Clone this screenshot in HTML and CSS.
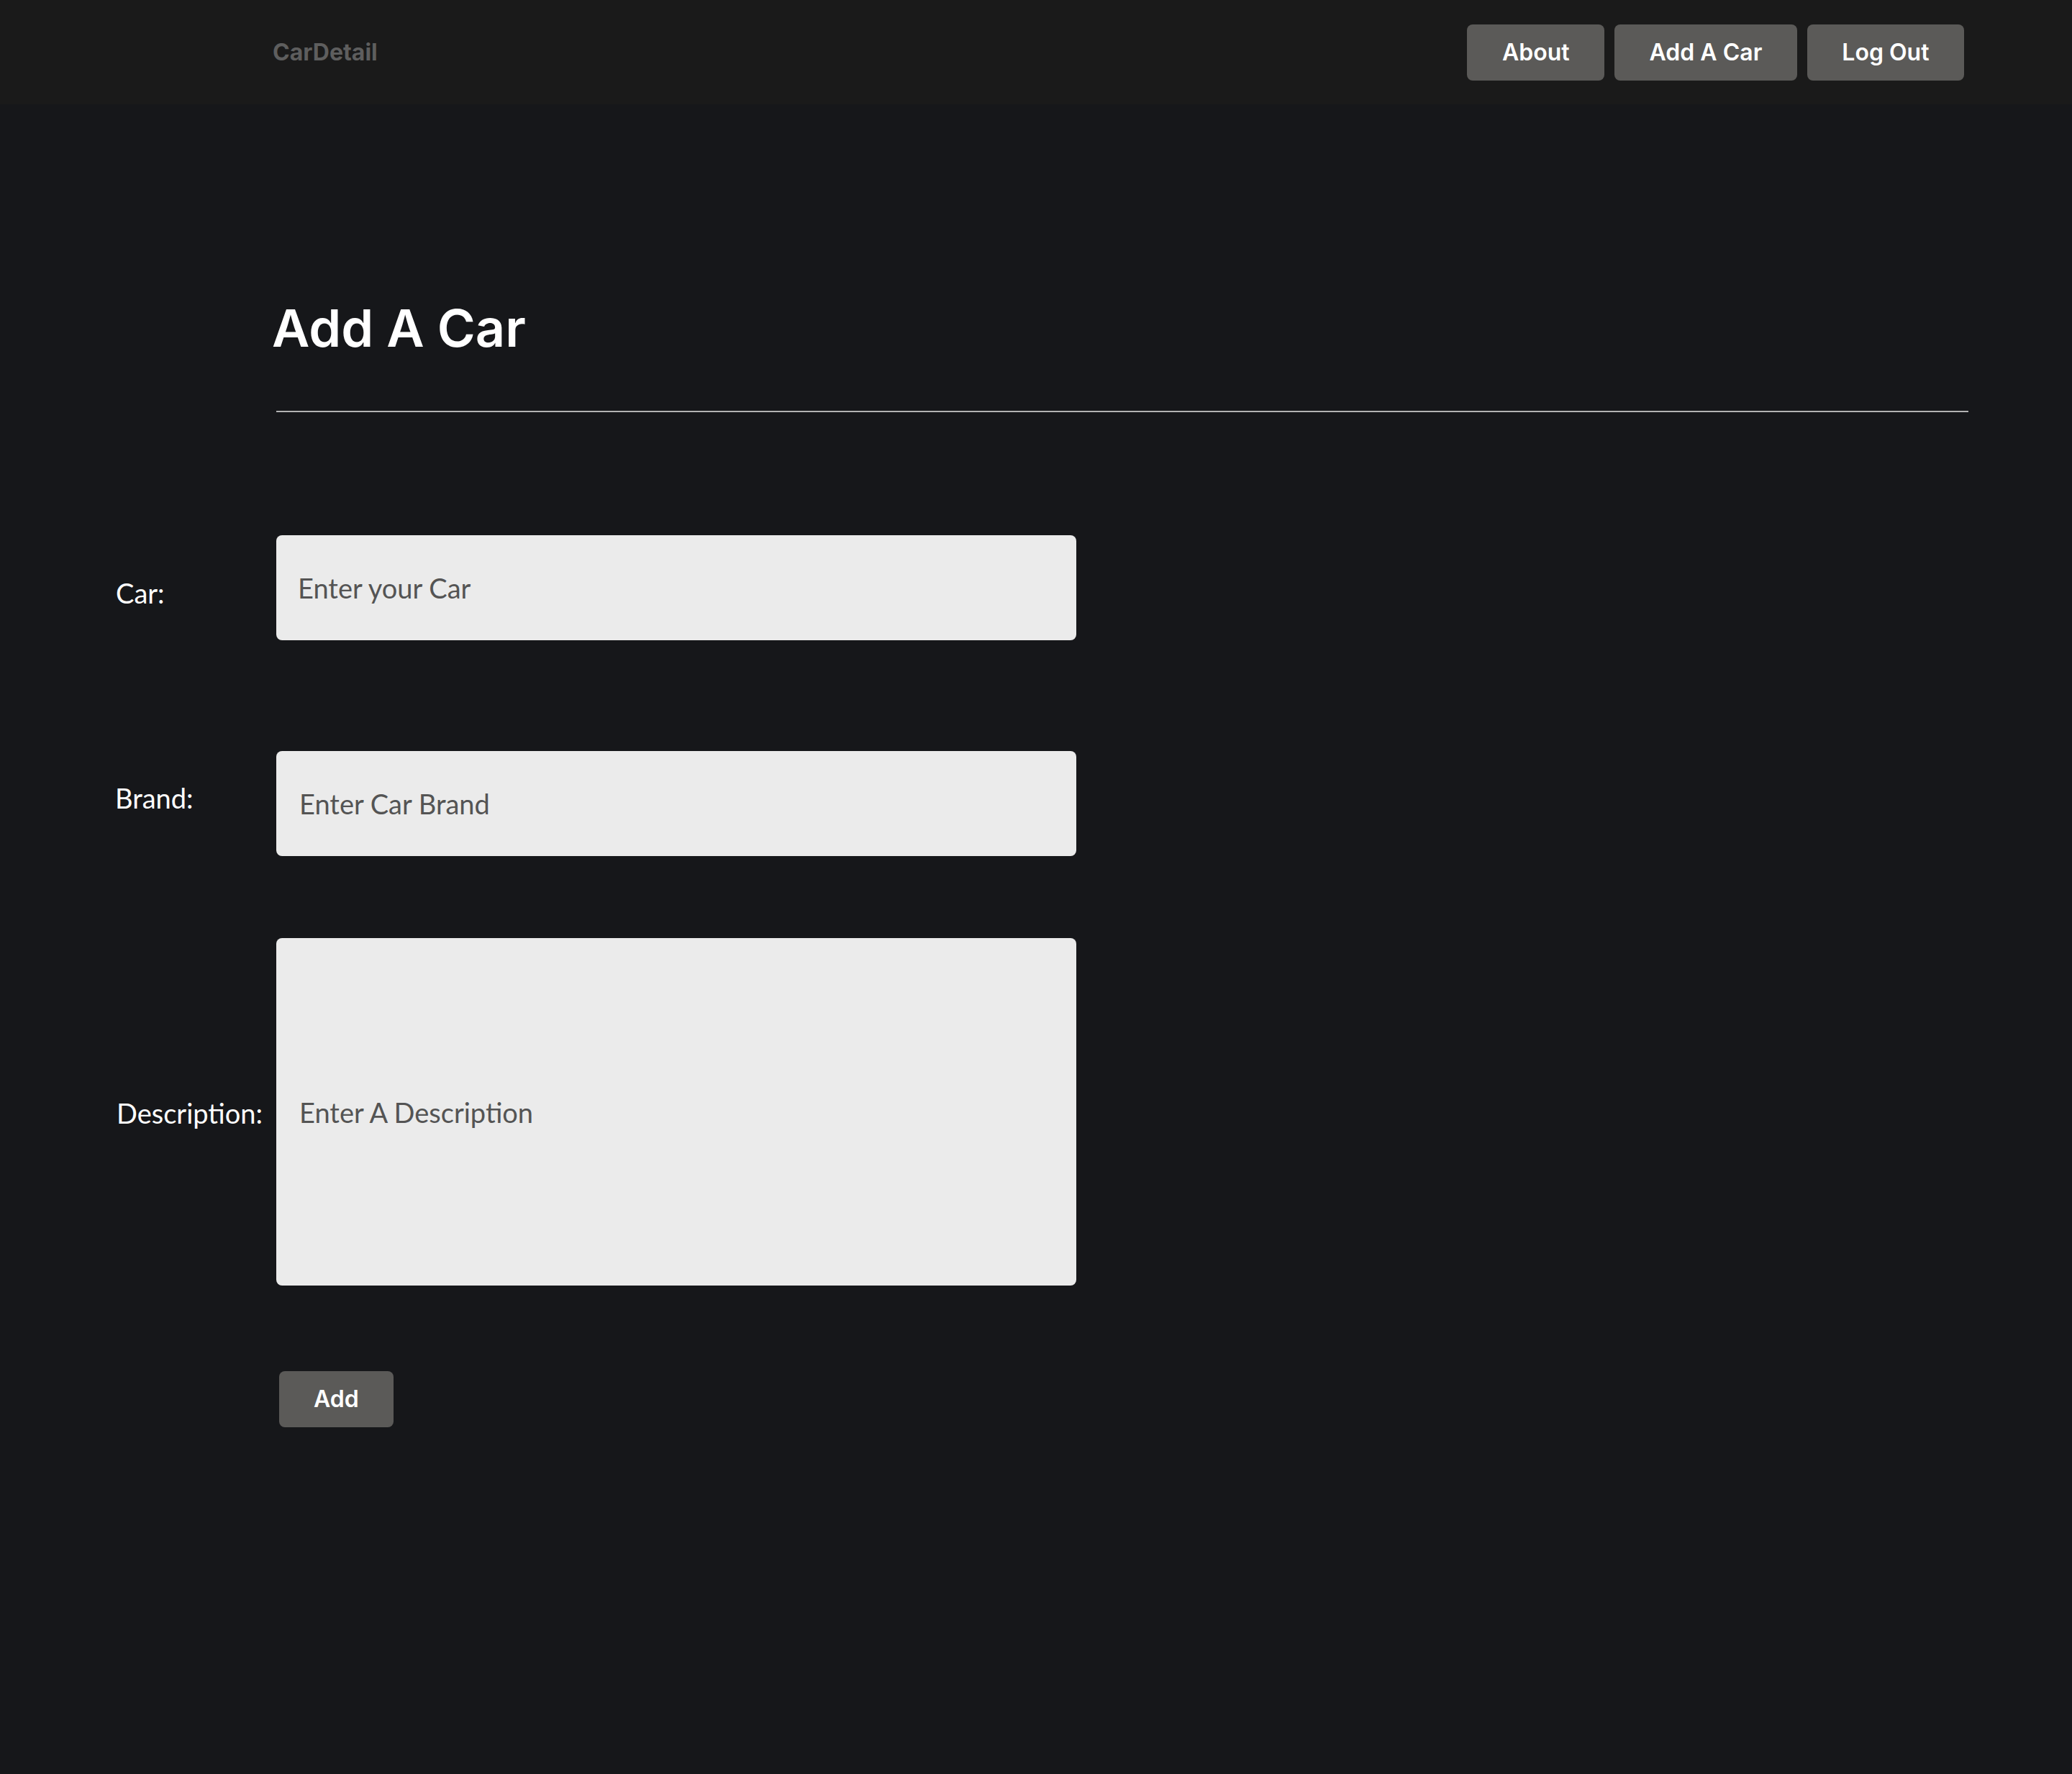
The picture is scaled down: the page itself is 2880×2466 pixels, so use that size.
FILE: index.html
```html
<!DOCTYPE html>
<html lang="en">
<head>
<meta charset="utf-8">
<title>CarDetail - Add A Car</title>
<link rel="stylesheet" href="styles.css">
</head>
<body>
<header class="navbar">
  <a class="brand" href="#">CarDetail</a>
  <nav class="nav-actions">
    <button class="btn" type="button">About</button>
    <button class="btn" type="button">Add A Car</button>
    <button class="btn" type="button">Log Out</button>
  </nav>
</header>
<main class="page">
  <h1 class="title">Add A Car</h1>
  <hr class="rule">
  <form class="car-form">
    <div class="field-row row-car">
      <label class="field-label label-car" for="car">Car:</label>
      <input class="field-input" id="car" type="text" placeholder="Enter your Car">
    </div>
    <div class="field-row row-brand">
      <label class="field-label label-brand" for="brand">Brand:</label>
      <input class="field-input field-brand" id="brand" type="text" placeholder="Enter Car Brand">
    </div>
    <div class="field-row row-desc">
      <label class="field-label label-desc" for="desc">Description:</label>
      <input class="field-input field-tall" id="desc" type="text" placeholder="Enter A Description">
    </div>
    <button class="btn btn-add" type="button">Add</button>
  </form>
</main>
</body>
</html>
```

FILE: styles.css
```css
html {
  background: #16171a;
}

body {
  margin: 0;
  min-height: 2466px;
  background: #16171a;
  font-family: Inter, "Noto Sans", sans-serif;
  color: #ffffff;
}

.navbar {
  height: 145px;
  box-sizing: border-box;
  background: #1a1a1a;
  display: flex;
  align-items: center;
  justify-content: space-between;
  padding: 0 150px 0 379px;
}

.brand {
  font-family: Inter, sans-serif;
  font-weight: 700;
  font-size: 32px;
  color: #5e5e5e;
  text-decoration: none;
}

.nav-actions {
  display: flex;
  gap: 14px;
}

.btn {
  font-family: Inter, sans-serif;
  font-weight: 600;
  font-size: 32px;
  line-height: 38px;
  color: #ffffff;
  background: #5b5a58;
  border: none;
  border-radius: 8px;
  padding: 20px 48.5px;
  cursor: pointer;
}

.page {
  display: flex;
  flex-direction: column;
}

.title {
  margin: 267px 0 0 378px;
  font-family: Inter, sans-serif;
  font-weight: 600;
  font-size: 72px;
  line-height: 87px;
  color: #ffffff;
}

.rule {
  margin: 72px 0 0 384px;
  width: 2352px;
  height: 2px;
  border: none;
  background: #b3b3b3;
}

.car-form {
  margin-top: 171px;
  padding-left: 160px;
  display: flex;
  flex-direction: column;
  align-items: flex-start;
}

.field-row {
  display: flex;
  align-items: flex-start;
}

.row-car { margin-bottom: 154px; }
.row-brand { margin-bottom: 114px; }
.row-desc { margin-bottom: 119px; }

.field-label {
  width: 224px;
  box-sizing: border-box;
  flex-shrink: 0;
  font-family: Lato, "Open Sans", sans-serif;
  font-size: 38px;
  line-height: 46px;
  color: #ffffff;
}

.label-car { padding-top: 57px; padding-left: 1px; }
.label-brand { padding-top: 42px; }
.label-desc { padding-top: 220px; padding-left: 2px; }

.field-input {
  width: 1112px;
  height: 146px;
  box-sizing: border-box;
  border: none;
  border-radius: 8px;
  background: #ebebeb;
  padding: 0 30px;
  font-family: Lato, "Open Sans", sans-serif;
  font-size: 38px;
  color: #333333;
  outline: none;
}

.field-brand {
  padding-left: 32px;
}

.field-tall {
  height: 483px;
  padding-left: 32px;
}

.field-input::placeholder {
  color: #545454;
  opacity: 1;
}

.btn-add {
  margin-left: 228px;
  padding: 20px 48px;
}
```
